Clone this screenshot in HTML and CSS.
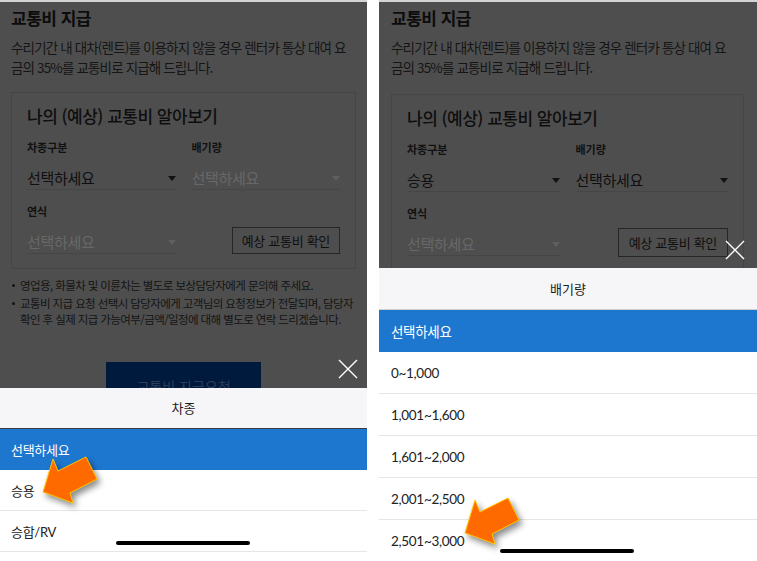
FILE: index.html
```html
<!DOCTYPE html>
<html lang="ko">
<head>
<meta charset="utf-8">
<title>교통비 지급</title>
<link rel="stylesheet" href="styles.css">
</head>
<body>
<div class="screens">
  <section class="phone phone--left">
    <div class="page">
      <h1 class="page-title">교통비 지급</h1>
      <p class="page-desc">수리기간 내 대차(렌트)를 이용하지 않을 경우 렌터카 통상 대여 요<br>금의 35%를 교통비로 지급해 드립니다.</p>
      <div class="calc">
        <h2 class="calc-title">나의 (예상) 교통비 알아보기</h2>
        <div class="calc-grid">
          <div class="field">
            <span class="field-label">차종구분</span>
            <div class="select"><span>선택하세요</span><i class="caret"></i></div>
          </div>
          <div class="field">
            <span class="field-label">배기량</span>
            <div class="select is-disabled"><span>선택하세요</span><i class="caret"></i></div>
          </div>
          <div class="field">
            <span class="field-label">연식</span>
            <div class="select is-disabled"><span>선택하세요</span><i class="caret"></i></div>
          </div>
          <button class="calc-btn">예상 교통비 확인</button>
        </div>
      </div>
      <ul class="notes">
        <li>영업용, 화물차 및 이륜차는 별도로 보상담당자에게 문의해 주세요.</li>
        <li>교통비 지급 요청 선택시 담당자에게 고객님의 요청정보가 전달되며, 담당자<br>확인 후 실제 지급 가능여부/금액/일정에 대해 별도로 연락 드리겠습니다.</li>
      </ul>
      <div class="submit">교통비 지급요청</div>
    </div>
    <div class="sheet">
      <svg class="sheet-close" viewBox="0 0 20 20" width="20" height="20"><path d="M1 1L19 19M19 1L1 19" stroke="#fff" stroke-width="1.4" fill="none"/></svg>
      <div class="sheet-head">차종</div>
      <ul class="options">
        <li class="is-active">선택하세요</li>
        <li>승용</li>
        <li>승합/RV</li>
      </ul>
    </div>
    <svg class="pointer" viewBox="0 0 66 58" width="66" height="58"><polygon points="5,40 15,7 20,19 48,5 59,27 32,41 35,51" fill="#ff6a00" stroke="#ffc400" stroke-width="1" stroke-linejoin="round"/></svg>
    <div class="home-bar"></div>
  </section>

  <section class="phone phone--right">
    <div class="page">
      <h1 class="page-title">교통비 지급</h1>
      <p class="page-desc">수리기간 내 대차(렌트)를 이용하지 않을 경우 렌터카 통상 대여 요<br>금의 35%를 교통비로 지급해 드립니다.</p>
      <div class="calc">
        <h2 class="calc-title">나의 (예상) 교통비 알아보기</h2>
        <div class="calc-grid">
          <div class="field">
            <span class="field-label">차종구분</span>
            <div class="select"><span>승용</span><i class="caret"></i></div>
          </div>
          <div class="field">
            <span class="field-label">배기량</span>
            <div class="select"><span>선택하세요</span><i class="caret"></i></div>
          </div>
          <div class="field">
            <span class="field-label">연식</span>
            <div class="select is-disabled"><span>선택하세요</span><i class="caret"></i></div>
          </div>
          <button class="calc-btn">예상 교통비 확인</button>
        </div>
      </div>
    </div>
    <div class="sheet">
      <svg class="sheet-close" viewBox="0 0 20 20" width="20" height="20"><path d="M1 1L19 19M19 1L1 19" stroke="#fff" stroke-width="1.4" fill="none"/></svg>
      <div class="sheet-head">배기량</div>
      <ul class="options">
        <li class="is-active">선택하세요</li>
        <li>0~1,000</li>
        <li>1,001~1,600</li>
        <li>1,601~2,000</li>
        <li>2,001~2,500</li>
        <li>2,501~3,000</li>
      </ul>
    </div>
    <svg class="pointer" viewBox="0 0 66 58" width="66" height="58"><polygon points="5,40 15,7 20,19 48,5 59,27 32,41 35,51" fill="#ff6a00" stroke="#ffc400" stroke-width="1" stroke-linejoin="round"/></svg>
    <div class="home-bar"></div>
  </section>
</div>
</body>
</html>
```

FILE: styles.css
```css
* { box-sizing: border-box; }

html, body {
  margin: 0;
  padding: 0;
  background: #fff;
}

body {
  font-family: "Noto Sans CJK KR", "Noto Sans", sans-serif;
  width: 757px;
  height: 561px;
  overflow: hidden;
}

.screens {
  display: flex;
  gap: 12px;
  height: 561px;
}

.phone {
  position: relative;
  height: 561px;
  overflow: hidden;
  background: #4e4e4e;
  border-top: 2px solid #d4d4d4;
}

.phone--left { width: 367px; }
.phone--right { width: 378px; }

/* dimmed page content */
.page {
  padding: 6px 11px 0 11px;
  color: #111;
}

.phone--right .page {
  padding: 6px 13px 0 12px;
}

.page-title {
  margin: 0;
  font-size: 17px;
  line-height: 20px;
  font-weight: 700;
  color: #0c0c0c;
  letter-spacing: -0.5px;
}

.page-desc {
  margin: 9px 0 0;
  font-size: 13.5px;
  line-height: 20px;
  color: #151515;
  letter-spacing: -0.85px;
  white-space: nowrap;
}

.calc {
  margin-top: 15px;
  border: 1px solid #454545;
  padding: 13px 15px 14px;
}

.phone--right .calc {
  margin-top: 17px;
}

.calc-title {
  margin: 0;
  font-size: 17px;
  line-height: 20px;
  font-weight: 500;
  color: #0e0e0e;
  letter-spacing: -0.5px;
}

.calc-grid {
  margin-top: 14px;
  display: grid;
  grid-template-columns: 1fr 1fr;
  column-gap: 16px;
  row-gap: 14px;
}

.field {
  display: flex;
  flex-direction: column;
}

.field-label {
  font-size: 11px;
  line-height: 14px;
  font-weight: 700;
  color: #111;
  margin-bottom: 13px;
}

.select {
  display: flex;
  align-items: center;
  justify-content: space-between;
  height: 23px;
  border-bottom: 1px solid #464646;
  font-size: 15px;
  line-height: 22px;
  color: #0f0f0f;
  letter-spacing: -0.3px;
}

.select span {
  margin-top: -1px;
}

.select.is-disabled {
  color: #686868;
}

.caret {
  width: 0;
  height: 0;
  border-left: 4px solid transparent;
  border-right: 4px solid transparent;
  border-top: 5px solid #111;
}

.select.is-disabled .caret {
  border-top-color: #5f5f5f;
}

.calc-btn {
  justify-self: end;
  align-self: end;
  height: 27px;
  padding: 0 9px;
  border: 1px solid #262626;
  background: transparent;
  font-family: inherit;
  font-size: 13px;
  color: #0f0f0f;
  letter-spacing: -0.3px;
}

.phone--right .calc-btn {
  height: 29px;
  padding: 0 10px;
  margin-bottom: -1px;
}

.notes {
  list-style: none;
  margin: 8px 0 0;
  padding: 0;
  font-size: 11.5px;
  line-height: 16px;
  color: #141414;
  letter-spacing: -0.6px;
  white-space: nowrap;
}

.notes li {
  position: relative;
  padding-left: 9px;
  margin-bottom: 2px;
}

.notes li::before {
  content: "";
  position: absolute;
  left: 1px;
  top: 7px;
  width: 3px;
  height: 3px;
  border-radius: 50%;
  background: #141414;
}

.submit {
  margin: 35px auto 0;
  width: 155px;
  height: 44px;
  background: #001a3e;
  color: #2c3d5c;
  font-size: 14px;
  text-align: center;
  line-height: 44px;
  padding-top: 2px;
}

/* bottom sheet */
.sheet {
  position: absolute;
  left: 0;
  right: 0;
  bottom: 0;
  top: 386px;
  background: #fff;
  --row: 41px;
}

.phone--right .sheet {
  top: 266px;
  --row: 42px;
}

.sheet-close {
  position: absolute;
  right: 9px;
  top: -29px;
}

.phone--right .sheet-close {
  right: 12px;
  top: -28px;
}

.sheet-head {
  height: 41px;
  background: #f6f6f8;
  border-bottom: 1px solid #3c3c3c;
  text-align: center;
  font-size: 13px;
  line-height: 40px;
  color: #1c1c1c;
}

.phone--right .sheet-head {
  height: 42px;
  line-height: 41px;
  border-bottom-color: #cfcfcf;
}

.options {
  list-style: none;
  margin: 0;
  padding: 0;
  font-family: "Lato", "Noto Sans CJK KR", sans-serif;
}

.options li {
  height: var(--row);
  padding-left: 11px;
  display: flex;
  align-items: center;
  font-size: 13px;
  color: #222;
  border-bottom: 1px solid #e6e6e6;
  letter-spacing: -0.3px;
}

.phone--right .options li {
  padding-left: 12px;
  font-size: 13.5px;
}

.options li.is-active {
  background: #1e77cf;
  color: #fff;
  border-bottom-color: #1e77cf;
}

/* annotation arrow */
.pointer {
  position: absolute;
  left: 38px;
  top: 450px;
  filter: drop-shadow(3px 4px 3px rgba(0, 0, 0, 0.45));
}

.phone--right .pointer {
  left: 81px;
  top: 491px;
}

.home-bar {
  position: absolute;
  left: 50%;
  bottom: 16px;
  width: 134px;
  height: 4px;
  margin-left: -68px;
  border-radius: 2px;
  background: #000;
}

.phone--right .home-bar {
  bottom: 8px;
}
```
